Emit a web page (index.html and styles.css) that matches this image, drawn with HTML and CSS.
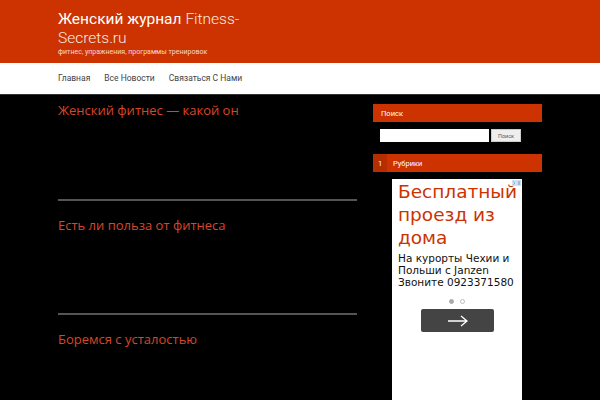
FILE: index.html
```html
<!DOCTYPE html>
<html lang="ru">
<head>
<meta charset="utf-8">
<link rel="stylesheet" href="styles.css">
</head>
<body>
<header class="site-header">
  <div class="wrap">
    <h1 class="site-title"><span class="bold">Женский журнал</span> <span class="light">Fitness-</span><br><span class="light">Secrets.ru</span></h1>
    <p class="tagline">фитнес, упражнения, программы тренировок</p>
  </div>
</header>
<nav class="site-nav">
  <div class="wrap nav-items">
    <a>Главная</a>
    <a>Все Новости</a>
    <a>Связаться С Нами</a>
  </div>
</nav>
<div class="wrap content">
  <main class="main">
    <article class="post"><h2>Женский фитнес — какой он</h2></article>
    <article class="post"><h2>Есть ли польза от фитнеса</h2></article>
    <article class="post last"><h2>Боремся с усталостью</h2></article>
  </main>
  <aside class="sidebar">
    <div class="widget-title">Поиск</div>
    <form class="search">
      <span class="search-input"></span>
      <span class="search-btn">Поиск</span>
    </form>
    <div class="widget-title cat"><span class="num">1</span><span>Рубрики</span></div>
    <div class="ad">
      <span class="adchoice"><svg width="9" height="6" viewBox="0 0 9 6"><rect width="9" height="6" fill="#cfe3f2"/><path d="M1 1l2 2-2 2M6 1l2 4M8 1L6 5" stroke="#7fa8c9" stroke-width="0.8" fill="none"/></svg></span>
      <div class="ad-head">Бесплатный проезд из дома</div>
      <div class="ad-body">На курорты Чехии и Польши с Janzen Звоните 0923371580</div>
      <div class="dots"><span class="dot on"></span><span class="dot"></span></div>
      <div class="ad-btn"><svg width="22" height="12" viewBox="0 0 22 12"><path d="M1 6h19M14 1l6 5-6 5" stroke="#fff" stroke-width="1.3" fill="none"/></svg></div>
    </div>
  </aside>
</div>
</body>
</html>
```
FILE: styles.css
```css
* { box-sizing: border-box; }
html, body { margin: 0; padding: 0; background: #000; height: 400px; overflow: hidden; }
body { font-family: Roboto, "Noto Sans", sans-serif; }
.wrap { width: 484px; margin-left: 58px; }
.site-header { background: #cc3300; height: 63px; padding-top: 10px; }
.site-title { margin: 0; width: 200px; font-size: 15.5px; line-height: 18.5px; font-weight: 400; color: #fff; }
.site-title .bold { font-weight: 400; }
.site-title .light { font-weight: 300; color: #fbe9e3; }
.tagline { margin: 1px 0 0; font-size: 7px; line-height: 9px; color: #f6d9cf; }
.site-nav { background: #fff; height: 32px; border-bottom: 1px solid #333; }
.nav-items { display: flex; gap: 14px; padding-top: 10px; }
.nav-items a { font-size: 8.5px; color: #444; }
.content { display: flex; justify-content: space-between; height: 305px; overflow: hidden; }
.main { width: 299px; }
.post { height: 114px; border-bottom: 2px solid #555; padding-top: 6px; }
.post.last { border-bottom: none; height: 80px; }
.post:first-child { height: 106px; }
.post h2 { margin: 0; font-family: "Open Sans", sans-serif; font-weight: 400; font-size: 13px; color: #d8462a; }
.post:nth-child(2) h2, .post:nth-child(3) h2 { margin-top: 9px; }
.sidebar { width: 169px; padding-top: 9px; }
.widget-title { background: #cc3300; height: 18px; color: #fff; font-size: 7.5px; padding-left: 8px; display: flex; align-items: center; }
.search { display: flex; gap: 2px; padding: 7px 0 12px 7px; }
.search-input { width: 109px; height: 13px; background: #fff; }
.search-btn { width: 30px; height: 13px; background: #eee; border: 1px solid #ccc; font-size: 5.5px; color: #555; display: flex; align-items: center; justify-content: center; }
.widget-title.cat { padding-left: 0; }
.num { background: #b52d00; width: 14px; height: 18px; display: flex; align-items: center; justify-content: center; margin-right: 6px; }
.ad { position: relative; width: 130px; height: 222px; background: #fff; margin: 7px 0 0 19px; padding: 1px 2px 0 6px; font-family: "DejaVu Sans", sans-serif; }
.adchoice { position: absolute; right: 1px; top: 1px; line-height: 0; }
.ad-head { color: #cc3300; font-size: 18.5px; line-height: 23px; }
.ad-body { color: #111; font-size: 10.5px; line-height: 12px; margin-top: 3px; }
.dots { display: flex; justify-content: center; gap: 6px; margin-top: 11px; padding-right: 4px; }
.dot { width: 5px; height: 5px; border-radius: 50%; border: 1px solid #bbb; }
.dot.on { background: #aaa; border-color: #aaa; }
.ad-btn { margin: 5px 0 0 23px; width: 73px; height: 23px; background: #444; border-radius: 2px; display: flex; align-items: center; justify-content: center; }
```
